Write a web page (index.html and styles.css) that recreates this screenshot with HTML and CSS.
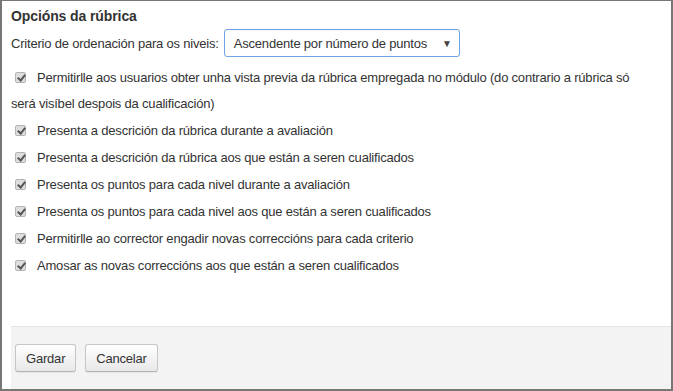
FILE: index.html
```html
<!DOCTYPE html>
<html lang="gl">
<head>
  <meta charset="UTF-8">
  <title>Opcións da rúbrica</title>
  <link rel="stylesheet" href="styles.css">
</head>
<body>
  <div class="frame">
    <div class="content">
      <h3 class="title">Opcións da rúbrica</h3>

      <div class="sort-row">
        <label for="sortlevels">Criterio de ordenación para os niveis:</label>
        <div class="select">
          <span>Ascendente por número de puntos</span>
          <span class="caret">&#9660;</span>
        </div>
      </div>

      <div class="options">
        <div class="option"><span class="check"></span>Permitirlle aos usuarios obter unha vista previa da rúbrica empregada no módulo (do contrario a rúbrica só será visíbel despois da cualificación)</div>
        <div class="option"><span class="check"></span>Presenta a descrición da rúbrica durante a avaliación</div>
        <div class="option"><span class="check"></span>Presenta a descrición da rúbrica aos que están a seren cualificados</div>
        <div class="option"><span class="check"></span>Presenta os puntos para cada nivel durante a avaliación</div>
        <div class="option"><span class="check"></span>Presenta os puntos para cada nivel aos que están a seren cualificados</div>
        <div class="option"><span class="check"></span>Permitirlle ao corrector engadir novas correccións para cada criterio</div>
        <div class="option"><span class="check"></span>Amosar as novas correccións aos que están a seren cualificados</div>
      </div>
    </div>

    <div class="footer">
      <button class="btn">Gardar</button>
      <button class="btn">Cancelar</button>
    </div>
  </div>
</body>
</html>
```

FILE: styles.css
```css
html, body {
  margin: 0;
  padding: 0;
  background: #fff;
}

body {
  font-family: 'Liberation Sans', Arial, sans-serif;
  font-size: 13px;
  letter-spacing: -0.2px;
  color: #333;
}

.frame {
  box-sizing: border-box;
  height: 391px;
  border: 2px solid #777;
  border-top-width: 1px;
  display: flex;
  flex-direction: column;
}

.content {
  padding: 5px 9px 0 9px;
}

.title {
  margin: 0;
  font-size: 14px;
  line-height: 20px;
  font-weight: bold;
  letter-spacing: -0.1px;
}

.sort-row {
  display: flex;
  align-items: center;
  margin-top: 3px;
}

.sort-row label {
  margin-right: 5px;
}

.select {
  box-sizing: border-box;
  width: 236px;
  height: 28px;
  border: 1px solid #6fa4e6;
  border-radius: 3px;
  display: flex;
  align-items: center;
  justify-content: space-between;
  padding: 0 7px 0 9px;
  box-shadow: inset 0 1px 1px rgba(0, 0, 0, 0.05);
}

.caret {
  font-size: 10px;
  color: #444;
}

.options {
  margin-top: 8px;
  padding-right: 10px;
}

.option {
  line-height: 26px;
  margin-bottom: 1px;
}

.check {
  display: inline-block;
  box-sizing: border-box;
  width: 11px;
  height: 11px;
  margin: 0 11px 0 4px;
  vertical-align: -1px;
  border: 1px solid #b4b4b4;
  border-radius: 2px;
  background: #dedede;
  position: relative;
}

.check::after {
  content: "";
  position: absolute;
  left: 3px;
  top: 0px;
  width: 3px;
  height: 6px;
  border: solid #555;
  border-width: 0 2px 2px 0;
  transform: rotate(40deg);
}

.footer {
  margin-top: auto;
  margin-left: 9px;
  height: 63px;
  box-sizing: border-box;
  background: #f3f3f3;
  border-top: 1px solid #e3e3e3;
  padding: 17px 0 0 4px;
  display: flex;
  gap: 9px;
  align-items: flex-start;
}

.btn {
  font-family: inherit;
  font-size: 13px;
  letter-spacing: -0.2px;
  color: #333;
  height: 28px;
  padding: 0 10px;
  border: 1px solid #c6c6c6;
  border-bottom-color: #b3b3b3;
  border-radius: 3px;
  background: linear-gradient(#fff, #e8e8e8);
  box-shadow: 0 1px 1px rgba(0, 0, 0, 0.06);
}
```
